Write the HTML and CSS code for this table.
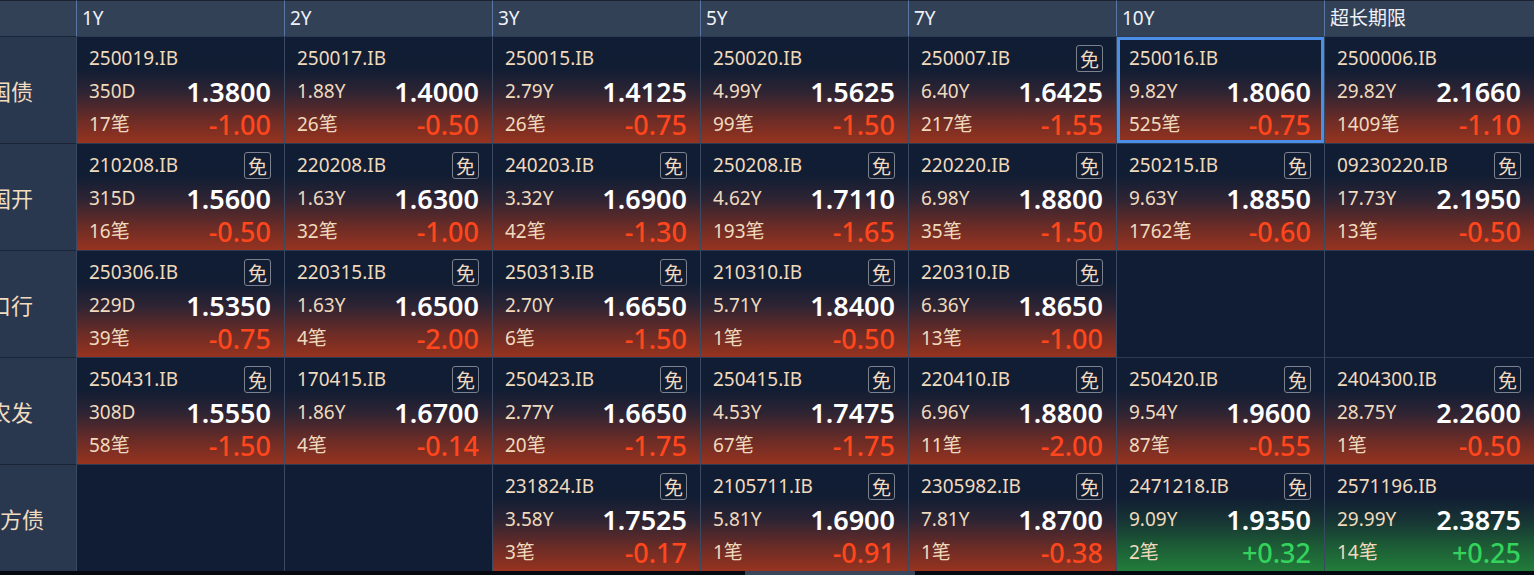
FILE: index.html
```html
<!DOCTYPE html>
<html lang="zh">
<head>
<meta charset="utf-8">
<title>Bond Board</title>
<link rel="stylesheet" href="styles.css">
</head>
<body>
<div class="board">
  <div class="hcell corner"></div>
  <div class="hcell">1Y</div>
  <div class="hcell">2Y</div>
  <div class="hcell">3Y</div>
  <div class="hcell">5Y</div>
  <div class="hcell">7Y</div>
  <div class="hcell">10Y</div>
  <div class="hcell">超长期限</div>

  <div class="label"><span class="ltext">国债</span></div>
  <div class="cell down"><div class="line"><span class="code">250019.IB</span></div><div class="line"><span class="term">350D</span><span class="price">1.3800</span></div><div class="line"><span class="term">17笔</span><span class="chg">-1.00</span></div></div>
  <div class="cell down"><div class="line"><span class="code">250017.IB</span></div><div class="line"><span class="term">1.88Y</span><span class="price">1.4000</span></div><div class="line"><span class="term">26笔</span><span class="chg">-0.50</span></div></div>
  <div class="cell down"><div class="line"><span class="code">250015.IB</span></div><div class="line"><span class="term">2.79Y</span><span class="price">1.4125</span></div><div class="line"><span class="term">26笔</span><span class="chg">-0.75</span></div></div>
  <div class="cell down"><div class="line"><span class="code">250020.IB</span></div><div class="line"><span class="term">4.99Y</span><span class="price">1.5625</span></div><div class="line"><span class="term">99笔</span><span class="chg">-1.50</span></div></div>
  <div class="cell down"><div class="line"><span class="code">250007.IB</span><span class="badge">免</span></div><div class="line"><span class="term">6.40Y</span><span class="price">1.6425</span></div><div class="line"><span class="term">217笔</span><span class="chg">-1.55</span></div></div>
  <div class="cell down selected"><div class="line"><span class="code">250016.IB</span></div><div class="line"><span class="term">9.82Y</span><span class="price">1.8060</span></div><div class="line"><span class="term">525笔</span><span class="chg">-0.75</span></div></div>
  <div class="cell down"><div class="line"><span class="code">2500006.IB</span></div><div class="line"><span class="term">29.82Y</span><span class="price">2.1660</span></div><div class="line"><span class="term">1409笔</span><span class="chg">-1.10</span></div></div>

  <div class="label"><span class="ltext">国开</span></div>
  <div class="cell down"><div class="line"><span class="code">210208.IB</span><span class="badge">免</span></div><div class="line"><span class="term">315D</span><span class="price">1.5600</span></div><div class="line"><span class="term">16笔</span><span class="chg">-0.50</span></div></div>
  <div class="cell down"><div class="line"><span class="code">220208.IB</span><span class="badge">免</span></div><div class="line"><span class="term">1.63Y</span><span class="price">1.6300</span></div><div class="line"><span class="term">32笔</span><span class="chg">-1.00</span></div></div>
  <div class="cell down"><div class="line"><span class="code">240203.IB</span><span class="badge">免</span></div><div class="line"><span class="term">3.32Y</span><span class="price">1.6900</span></div><div class="line"><span class="term">42笔</span><span class="chg">-1.30</span></div></div>
  <div class="cell down"><div class="line"><span class="code">250208.IB</span><span class="badge">免</span></div><div class="line"><span class="term">4.62Y</span><span class="price">1.7110</span></div><div class="line"><span class="term">193笔</span><span class="chg">-1.65</span></div></div>
  <div class="cell down"><div class="line"><span class="code">220220.IB</span><span class="badge">免</span></div><div class="line"><span class="term">6.98Y</span><span class="price">1.8800</span></div><div class="line"><span class="term">35笔</span><span class="chg">-1.50</span></div></div>
  <div class="cell down"><div class="line"><span class="code">250215.IB</span><span class="badge">免</span></div><div class="line"><span class="term">9.63Y</span><span class="price">1.8850</span></div><div class="line"><span class="term">1762笔</span><span class="chg">-0.60</span></div></div>
  <div class="cell down"><div class="line"><span class="code">09230220.IB</span><span class="badge">免</span></div><div class="line"><span class="term">17.73Y</span><span class="price">2.1950</span></div><div class="line"><span class="term">13笔</span><span class="chg">-0.50</span></div></div>

  <div class="label"><span class="ltext">口行</span></div>
  <div class="cell down"><div class="line"><span class="code">250306.IB</span><span class="badge">免</span></div><div class="line"><span class="term">229D</span><span class="price">1.5350</span></div><div class="line"><span class="term">39笔</span><span class="chg">-0.75</span></div></div>
  <div class="cell down"><div class="line"><span class="code">220315.IB</span><span class="badge">免</span></div><div class="line"><span class="term">1.63Y</span><span class="price">1.6500</span></div><div class="line"><span class="term">4笔</span><span class="chg">-2.00</span></div></div>
  <div class="cell down"><div class="line"><span class="code">250313.IB</span><span class="badge">免</span></div><div class="line"><span class="term">2.70Y</span><span class="price">1.6650</span></div><div class="line"><span class="term">6笔</span><span class="chg">-1.50</span></div></div>
  <div class="cell down"><div class="line"><span class="code">210310.IB</span><span class="badge">免</span></div><div class="line"><span class="term">5.71Y</span><span class="price">1.8400</span></div><div class="line"><span class="term">1笔</span><span class="chg">-0.50</span></div></div>
  <div class="cell down"><div class="line"><span class="code">220310.IB</span><span class="badge">免</span></div><div class="line"><span class="term">6.36Y</span><span class="price">1.8650</span></div><div class="line"><span class="term">13笔</span><span class="chg">-1.00</span></div></div>
  <div class="cell empty"></div>
  <div class="cell empty"></div>

  <div class="label"><span class="ltext">农发</span></div>
  <div class="cell down"><div class="line"><span class="code">250431.IB</span><span class="badge">免</span></div><div class="line"><span class="term">308D</span><span class="price">1.5550</span></div><div class="line"><span class="term">58笔</span><span class="chg">-1.50</span></div></div>
  <div class="cell down"><div class="line"><span class="code">170415.IB</span><span class="badge">免</span></div><div class="line"><span class="term">1.86Y</span><span class="price">1.6700</span></div><div class="line"><span class="term">4笔</span><span class="chg">-0.14</span></div></div>
  <div class="cell down"><div class="line"><span class="code">250423.IB</span><span class="badge">免</span></div><div class="line"><span class="term">2.77Y</span><span class="price">1.6650</span></div><div class="line"><span class="term">20笔</span><span class="chg">-1.75</span></div></div>
  <div class="cell down"><div class="line"><span class="code">250415.IB</span><span class="badge">免</span></div><div class="line"><span class="term">4.53Y</span><span class="price">1.7475</span></div><div class="line"><span class="term">67笔</span><span class="chg">-1.75</span></div></div>
  <div class="cell down"><div class="line"><span class="code">220410.IB</span><span class="badge">免</span></div><div class="line"><span class="term">6.96Y</span><span class="price">1.8800</span></div><div class="line"><span class="term">11笔</span><span class="chg">-2.00</span></div></div>
  <div class="cell down"><div class="line"><span class="code">250420.IB</span><span class="badge">免</span></div><div class="line"><span class="term">9.54Y</span><span class="price">1.9600</span></div><div class="line"><span class="term">87笔</span><span class="chg">-0.55</span></div></div>
  <div class="cell down"><div class="line"><span class="code">2404300.IB</span><span class="badge">免</span></div><div class="line"><span class="term">28.75Y</span><span class="price">2.2600</span></div><div class="line"><span class="term">1笔</span><span class="chg">-0.50</span></div></div>

  <div class="label"><span class="ltext">地方债</span></div>
  <div class="cell empty"></div>
  <div class="cell empty"></div>
  <div class="cell down"><div class="line"><span class="code">231824.IB</span><span class="badge">免</span></div><div class="line"><span class="term">3.58Y</span><span class="price">1.7525</span></div><div class="line"><span class="term">3笔</span><span class="chg">-0.17</span></div></div>
  <div class="cell down"><div class="line"><span class="code">2105711.IB</span><span class="badge">免</span></div><div class="line"><span class="term">5.81Y</span><span class="price">1.6900</span></div><div class="line"><span class="term">1笔</span><span class="chg">-0.91</span></div></div>
  <div class="cell down"><div class="line"><span class="code">2305982.IB</span><span class="badge">免</span></div><div class="line"><span class="term">7.81Y</span><span class="price">1.8700</span></div><div class="line"><span class="term">1笔</span><span class="chg">-0.38</span></div></div>
  <div class="cell up"><div class="line"><span class="code">2471218.IB</span><span class="badge">免</span></div><div class="line"><span class="term">9.09Y</span><span class="price">1.9350</span></div><div class="line"><span class="term">2笔</span><span class="chg">+0.32</span></div></div>
  <div class="cell up"><div class="line"><span class="code">2571196.IB</span></div><div class="line"><span class="term">29.99Y</span><span class="price">2.3875</span></div><div class="line"><span class="term">14笔</span><span class="chg">+0.25</span></div></div>

  <div class="scrollbar"><div class="thumb"></div></div>
</div>
</body>
</html>
```
FILE: styles.css
```css
* { box-sizing: border-box; }
html, body {
  margin: 0;
  padding: 0;
  background: #0a0f19;
  overflow: hidden;
}
body {
  font-family: "Noto Sans", "Noto Sans CJK SC", sans-serif;
  width: 1534px;
  height: 575px;
}
.board {
  display: grid;
  grid-template-columns: 76px repeat(7, 208px) 2px;
  grid-template-rows: 36px repeat(5, 107px) 4px;
  background: #101c32;
}
.hcell {
  background: #334156;
  border-top: 1px solid #1a2232;
  border-left: 1px solid #5877a9;
  color: #eef2f8;
  font-size: 19px;
  line-height: 34px;
  padding-left: 5px;
  white-space: nowrap;
}
.hcell.corner { border-left: none; }
.board > .hcell:nth-child(8) { grid-column: span 2; }
.label {
  background: #2a384f;
  border-top: 1px solid #1a2436;
  display: flex;
  align-items: center;
  overflow: hidden;
}
.ltext {
  width: 22px;
  display: flex;
  justify-content: center;
  white-space: nowrap;
  color: #f1dcc0;
  font-size: 22px;
  line-height: 1.2;
  font-family: "Noto Sans CJK SC", sans-serif;
}
.cell {
  border-top: 1px solid #2c3a52;
  border-left: 1px solid #3b4a63;
  padding: 5px 13px 1px 12px;
  display: flex;
  flex-direction: column;
}
.board > .cell:nth-child(8n+8) { grid-column: span 2; }
.cell.empty { background: #101d34; }
.cell.down {
  background: linear-gradient(to bottom, #101d34 0%, #111d33 30%, #2e2433 52%, #6c2c26 78%, #97331f 100%);
}
.cell.up {
  background: linear-gradient(to bottom, #101d34 0%, #111d33 30%, #173434 52%, #1d5e36 78%, #227d3b 100%);
}
.cell.selected {
  box-shadow: inset 0 0 0 3px #4b8ee8;
}
.line {
  height: 33px;
  display: flex;
  align-items: center;
  justify-content: space-between;
  white-space: nowrap;
}
.code, .term {
  color: #f0dabd;
  font-size: 19px;
  line-height: 1.1;
}
.price {
  color: #ffffff;
  font-size: 27px;
  font-weight: 600;
  line-height: 1;
}
.chg {
  color: #ff461c;
  font-size: 27px;
  font-weight: 500;
  line-height: 1;
}
.up .chg { color: #33d35c; }
.badge {
  width: 27px;
  height: 27px;
  border: 1px solid #7b828e;
  border-radius: 3px;
  color: #f0dabd;
  font-size: 19px;
  line-height: 25px;
  text-align: center;
  font-family: "Noto Sans CJK SC", sans-serif;
}
.scrollbar {
  grid-column: 1 / -1;
  background: #06090f;
}
.thumb {
  margin-left: 745px;
  width: 170px;
  height: 4px;
  background: #3a475b;
}
```
